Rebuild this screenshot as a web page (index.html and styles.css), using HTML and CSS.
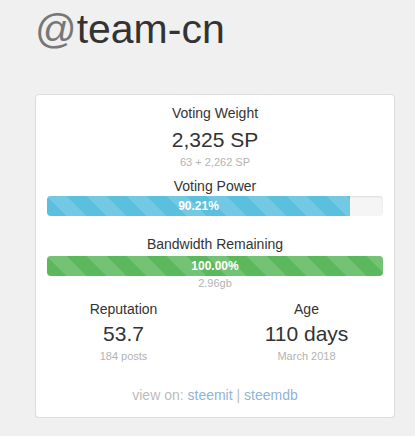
FILE: index.html
```html
<!DOCTYPE html>
<html lang="en">
  <head>
    <meta charset="UTF-8" />
    <title>@team-cn</title>
    <link rel="stylesheet" href="styles.css">
  </head>
  <body>
    <div class="container">
      <h1 class="account"><span class="at">@</span>team-cn</h1>

      <div class="panel">
        <div class="stat">
          <div class="label">Voting Weight</div>
          <div class="value">2,325 SP</div>
          <div class="sub">63 + 2,262 SP</div>
        </div>

        <div class="label vp-label">Voting Power</div>
        <div class="progress">
          <div class="progress-bar bar-info" style="width: 90.21%">90.21%</div>
        </div>

        <div class="label bw-label">Bandwidth Remaining</div>
        <div class="progress">
          <div class="progress-bar bar-success" style="width: 100%">100.00%</div>
        </div>
        <div class="sub">2.96gb</div>

        <div class="row">
          <div class="col">
            <div class="label">Reputation</div>
            <div class="value">53.7</div>
            <div class="sub">184 posts</div>
          </div>
          <div class="col">
            <div class="label">Age</div>
            <div class="value">110 days</div>
            <div class="sub">March 2018</div>
          </div>
        </div>

        <div class="links">
          view on: <a href="#">steemit</a> | <a href="#">steemdb</a>
        </div>
      </div>
    </div>
  </body>
</html>
```

FILE: styles.css
```css
body,
html {
  margin: 0;
  padding: 0;
}

body {
  background: #f0f0f0;
  font-family: "Liberation Sans", Arial, sans-serif;
  color: #333;
  font-size: 14px;
}

.container {
  padding: 0 20px 0 35px;
}

.account {
  font-size: 41px;
  font-weight: 400;
  line-height: 46px;
  margin: 6px 0 42px 0;
  color: #333;
}

.account .at {
  color: #777;
}

.panel {
  background: #fff;
  border: 1px solid #ddd;
  border-radius: 4px;
  box-shadow: 0 1px 1px rgba(0, 0, 0, 0.05);
  padding: 8px 11px 12px;
  text-align: center;
}

.label {
  font-size: 14px;
  line-height: 20px;
}

.value {
  font-size: 21px;
  line-height: 24px;
  margin-top: 5px;
}

.sub {
  font-size: 11px;
  line-height: 14px;
  color: #b3b3b3;
  margin-top: 3px;
}

.vp-label {
  margin-top: 7px;
}

.bw-label {
  margin-top: 18px;
}

.progress {
  height: 20px;
  background: #f5f5f5;
  border-radius: 4px;
  box-shadow: inset 0 1px 2px rgba(0, 0, 0, 0.1);
  overflow: hidden;
  margin-top: 0;
  margin-bottom: 1px;
  display: flex;
}

.bw-label + .progress {
  margin-top: 2px;
}

.progress-bar {
  height: 20px;
  line-height: 20px;
  color: #fff;
  font-size: 12px;
  font-weight: 700;
  text-align: center;
  background-image: linear-gradient(
    45deg,
    rgba(255, 255, 255, 0.15) 25%,
    transparent 25%,
    transparent 50%,
    rgba(255, 255, 255, 0.15) 50%,
    rgba(255, 255, 255, 0.15) 75%,
    transparent 75%,
    transparent
  );
  background-size: 40px 40px;
}

.bar-info {
  background-color: #5bc0de;
}

.bar-success {
  background-color: #5cb85c;
}

.progress + .sub {
  margin-top: -1px;
}

.row {
  display: flex;
  margin: 9px -15px 0;
}

.row .col {
  flex: 1;
  padding: 0 15px;
}

.row .value {
  margin-top: 3px;
}

.links {
  margin-top: 22px;
  font-size: 14px;
  line-height: 20px;
  color: #bbb;
}

.links a {
  color: #8fb4d6;
  text-decoration: none;
}
```
